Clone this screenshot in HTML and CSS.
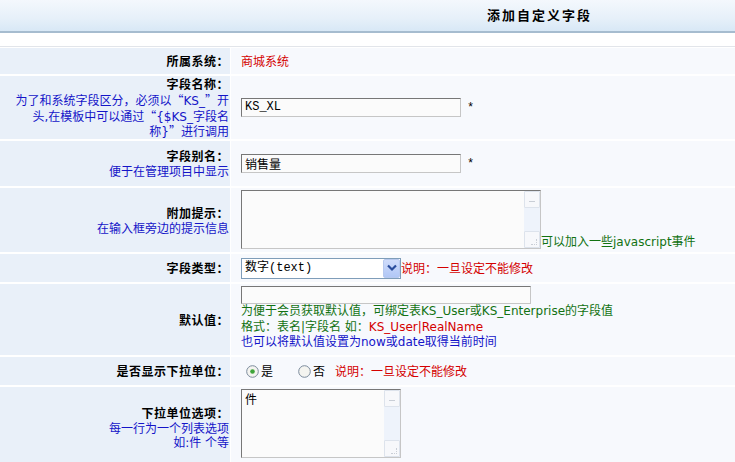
FILE: index.html
```html
<!DOCTYPE html>
<html lang="zh-CN">
<head>
<meta charset="utf-8">
<title>添加自定义字段</title>
<link rel="stylesheet" href="styles.css">
</head>
<body>
<div class="header"><span class="title">添加自定义字段</span></div>
<div class="form">
  <div class="lab r1"><b>所属系统：</b></div>
  <div class="val r1"><span class="red">商城系统</span></div>

  <div class="lab r2"><b>字段名称：</b><span class="desc">为了和系统字段区分，必须以<span class="q">“</span>KS_<span class="q">”</span>开</span><span class="desc">头,在模板中可以通过<span class="q">“</span>{$KS_字段名</span><span class="desc">称}<span class="q">”</span>进行调用</span></div>
  <div class="val r2"><div class="inp w220">KS_XL</div><span class="star">*</span></div>

  <div class="lab r3"><b>字段别名：</b><span class="desc">便于在管理项目中显示</span></div>
  <div class="val r3"><div class="inp w220 cjk">销售量</div><span class="star">*</span></div>

  <div class="lab r4"><b>附加提示：</b><span class="desc">在输入框旁边的提示信息</span></div>
  <div class="val r4 bottom">
    <div class="area a300">
      <div class="area-text"></div>
      <div class="sbar"><div class="sbtn up"><span class="dash"></span></div><div class="strack"></div><div class="sbtn down"><span class="grip"></span></div></div>
    </div>
    <span class="green">可以加入一些javascript事件</span>
  </div>

  <div class="lab r5"><b>字段类型：</b></div>
  <div class="val r5">
    <div class="sel"><span class="sel-text">数字(text)</span><span class="sel-btn"><svg width="10" height="8" viewBox="0 0 10 8"><path d="M1 1.5 L5 5.5 L9 1.5" fill="none" stroke="#2a4d9c" stroke-width="2.2"/></svg></span></div>
    <span class="red">说明：一旦设定不能修改</span>
  </div>

  <div class="lab r6"><b>默认值：</b></div>
  <div class="val r6 col">
    <div class="inp w290"></div>
    <span class="green line">为便于会员获取默认值，可绑定表KS_User或KS_Enterprise的字段值</span>
    <span class="green line">格式：表名|字段名 如：<span class="red">KS_User|RealName</span></span>
    <span class="blue line">也可以将默认值设置为now或date取得当前时间</span>
  </div>

  <div class="lab r7"><b>是否显示下拉单位：</b></div>
  <div class="val r7">
    <label class="radio"><svg width="13" height="13" viewBox="0 0 13 13"><circle cx="6.5" cy="6.5" r="5.8" fill="#f4f4f0" stroke="#7b8a9c" stroke-width="1"/><circle cx="6.5" cy="6.5" r="2.3" fill="#3fa43a"/></svg><span>是</span></label>
    <label class="radio second"><svg width="13" height="13" viewBox="0 0 13 13"><circle cx="6.5" cy="6.5" r="5.8" fill="#f4f4f0" stroke="#7b8a9c" stroke-width="1"/></svg><span>否</span></label>
    <span class="red note">说明：一旦设定不能修改</span>
  </div>

  <div class="lab r8"><b>下拉单位选项：</b><span class="desc">每一行为一个列表选项</span><span class="desc">如:件 个等</span></div>
  <div class="val r8 top">
    <div class="area a160">
      <div class="area-text">件</div>
      <div class="sbar"><div class="sbtn up"><span class="dash"></span></div><div class="strack"></div><div class="sbtn down"><span class="grip"></span></div></div>
    </div>
  </div>
</div>
</body>
</html>
```
FILE: styles.css
```css
* { box-sizing: border-box; }
html, body { margin: 0; padding: 0; background: #fff; }
body {
  font-family: "DejaVu Sans", "Noto Sans CJK SC", sans-serif;
  font-size: 12px;
  color: #000;
  line-height: 14px;
}
.header {
  height: 33px;
  background: linear-gradient(#f4f8fd, #e6f0f9 60%, #d8e8f6);
  border-bottom: 2px solid #a6bccf;
  padding-left: 487px;
}
.title {
  display: block;
  font-family: "Noto Sans CJK SC", sans-serif;
  font-weight: bold;
  font-size: 13px;
  letter-spacing: 2px;
  line-height: 29px;
}
.form {
  margin-top: 13px;
  border-top: 1px solid #e2e5ea;
  padding-top: 1px;
  display: grid;
  grid-template-columns: 230px 1fr;
  grid-template-rows: 26px 63px 45px 64px 28px 71px 28px 80px;
  column-gap: 1px;
  row-gap: 2px;
}
.lab {
  background: #e9f0f9;
  display: flex;
  flex-direction: column;
  align-items: flex-end;
  justify-content: center;
  text-align: right;
  padding-right: 1px;
}
.lab b {
  display: block;
  font-family: "Noto Sans CJK SC", sans-serif;
  font-weight: bold;
  letter-spacing: 0.5px;
  line-height: 18px;
}
.desc { display: block; color: #1414c8; line-height: 14.5px; white-space: nowrap; }
.q { font-family: "Noto Sans CJK SC", sans-serif; }
.val {
  background: #f7f9fd;
  display: flex;
  align-items: center;
  padding-left: 10px;
}
.val.bottom { align-items: flex-end; padding-bottom: 3px; }
.val.top { align-items: flex-start; padding-top: 2px; }
.val.col { flex-direction: column; align-items: flex-start; justify-content: flex-start; padding-top: 2px; }
.red { color: #d40000; font-family: "Noto Sans CJK SC", sans-serif; }
.green { color: #127212; }
.blue { color: #1414c8; }
.line { line-height: 15.5px; }
.line .red { font-family: "DejaVu Sans", sans-serif; }
.star { margin-left: 6px; font-family: "Liberation Mono", monospace; }
.inp {
  height: 19px;
  background: #fbfbfb;
  border: 1px solid;
  border-color: #777 #c6c6c6 #c6c6c6 #777;
  font-family: "Liberation Mono", "Noto Sans CJK SC", monospace;
  font-size: 12px;
  line-height: 17px;
  padding-left: 3px;
}
.inp.cjk { font-family: "Noto Sans CJK SC", sans-serif; }
.w220 { width: 220px; }
.w290 { width: 290px; height: 18px; }
.area {
  display: flex;
  background: #fbfbfb;
  border: 1px solid;
  border-color: #777 #c6c6c6 #c6c6c6 #777;
}
.a300 { width: 300px; height: 59px; }
.a160 { width: 160px; height: 69px; }
.area-text {
  flex: 1;
  padding: 2px 3px;
  font-family: "Noto Sans CJK SC", sans-serif;
}
.sbar {
  width: 16px;
  display: flex;
  flex-direction: column;
  background: #eef3fb;
}
.strack { flex: 1; }
.sbtn {
  height: 17px;
  border: 1px solid #dde3ec;
  background: #f7f8fb;
  border-radius: 1px;
  display: flex;
  align-items: center;
  justify-content: center;
}
.dash { width: 6px; height: 1px; background: #c9ced6; margin-top: 4px; }
.grip { width: 6px; height: 6px; border-right: 1px dotted #c9ced6; border-bottom: 1px dotted #c9ced6; margin: 4px 0 0 4px; }
.sel {
  position: relative;
  width: 160px;
  height: 21px;
  border: 1px solid #7f9db9;
  background: #fff;
  display: flex;
  align-items: center;
}
.sel-text {
  flex: 1;
  padding-left: 3px;
  font-family: "Liberation Mono", "Noto Sans CJK SC", monospace;
}
.sel-btn {
  width: 17px;
  height: 19px;
  background: linear-gradient(#cfdcfb, #b1c7f6);
  border: 1px solid #b7c9ef;
  border-radius: 2px;
  display: flex;
  align-items: center;
  justify-content: center;
}
.radio {
  display: flex;
  align-items: center;
  font-family: "Noto Sans CJK SC", sans-serif;
  padding-left: 5px;
}
.radio svg { margin-right: 2px; }
.radio.second { margin-left: 25px; padding-left: 0; }
.note { margin-left: 10px; }
```
